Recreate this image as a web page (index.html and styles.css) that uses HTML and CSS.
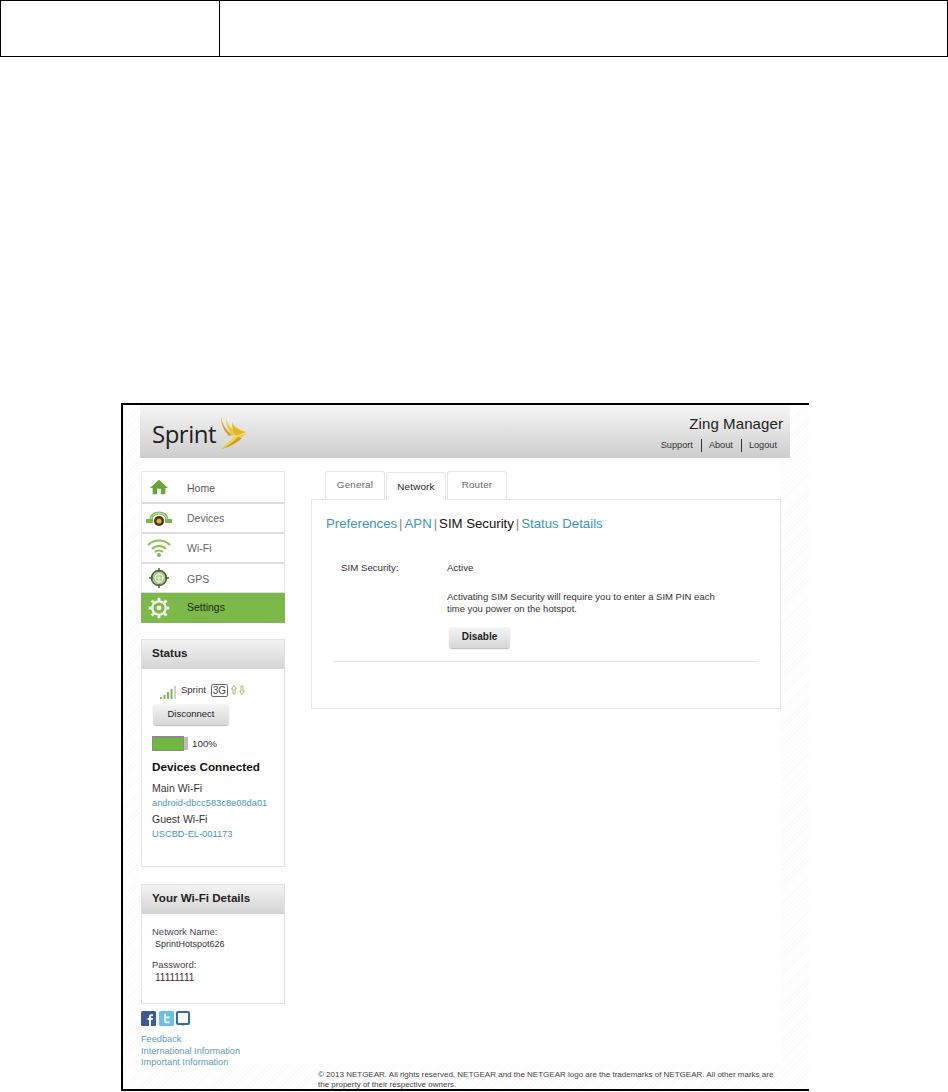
FILE: index.html
```html
<!DOCTYPE html>
<html lang="en">
<head>
    <meta charset="UTF-8">
    <title>Zing Manager</title>
    <link rel="stylesheet" href="styles.css">
</head>
<body>
    <div class="doc-table">
        <div class="doc-cell doc-cell-left"></div>
        <div class="doc-cell"></div>
    </div>

    <div class="shot">
        <div class="header">
            <div class="logo">
                <span class="logo-text">Sprint</span>
                <svg class="logo-wings" width="29" height="34" viewBox="0 0 29 34">
                    <path d="M3 1 C4 8 8 14 14 19 L11 20 C6 15 3 8 3 1Z" fill="#c9a227"/>
                    <path d="M8 2 C9 8 13 13 20 17 L15 20 C10 15 8 8 8 2Z" fill="#f0c92e"/>
                    <path d="M14 6 C15 10 20 14 28 16 L18 20 C15 16 14 11 14 6Z" fill="#e3b622"/>
                    <path d="M28 17 C21 25 12 31 3 33 C7 29 12 25 16 21Z" fill="#f4d23c"/>
                    <path d="M20 21 C14 27 8 31 3 33 C8 32 17 29 24 22Z" fill="#c9a227"/>
                </svg>
            </div>
            <div class="header-right">
                <div class="app-title">Zing Manager</div>
                <div class="header-links">
                    <span>Support</span><span class="header-sep"></span><span>About</span><span class="header-sep"></span><span>Logout</span>
                </div>
            </div>
        </div>

        <div class="columns">
            <div class="sidebar">
                <div class="nav">
                    <div class="nav-item nav-home">
                        <svg class="nav-icon" width="20" height="17" viewBox="0 0 22 18"><path d="M11 1 L21 10 H18 V17 H13 V11 H9 V17 H4 V10 H1Z" fill="#6aa53b"/></svg>
                        <span>Home</span>
                    </div>
                    <div class="nav-item nav-devices">
                        <svg class="nav-icon" width="28" height="18" viewBox="0 0 28 18">
                            <path d="M6 10 C8 2 20 2 22 10" fill="none" stroke="#7ab648" stroke-width="3"/>
                            <path d="M6 10 C8 2 20 2 22 10" fill="none" stroke="#d5e8c4" stroke-width="1"/>
                            <rect x="1" y="10" width="7" height="4" fill="#7ab648"/>
                            <rect x="20" y="10" width="7" height="4" fill="#7ab648"/>
                            <circle cx="14" cy="12" r="5" fill="#3a3420"/>
                            <circle cx="14" cy="12" r="2.6" fill="#e0b12c"/>
                        </svg>
                        <span>Devices</span>
                    </div>
                    <div class="nav-item nav-wifi">
                        <svg class="nav-icon" width="24" height="18" viewBox="0 0 24 18">
                            <path d="M1 6 C7 0 17 0 23 6" fill="none" stroke="#8cc152" stroke-width="2"/>
                            <path d="M5 10 C9 6 15 6 19 10" fill="none" stroke="#8cc152" stroke-width="2"/>
                            <path d="M8 13 C10 11 14 11 16 13" fill="none" stroke="#8cc152" stroke-width="2"/>
                            <circle cx="12" cy="16" r="2" fill="#7ab648"/>
                        </svg>
                        <span>Wi-Fi</span>
                    </div>
                    <div class="nav-item nav-gps">
                        <svg class="nav-icon" width="20" height="20" viewBox="0 0 20 20">
                            <circle cx="10" cy="10" r="7.5" fill="#a9cf86" stroke="#4c5a40" stroke-width="1.6"/>
                            <circle cx="10" cy="10" r="4" fill="none" stroke="#e9f2df" stroke-width="1"/>
                            <path d="M10 0V4M10 16V20M0 10H4M16 10H20" stroke="#4c5a40" stroke-width="1.4"/>
                            <path d="M10 5V15M5 10H15" stroke="#e9f2df" stroke-width="1"/>
                        </svg>
                        <span>GPS</span>
                    </div>
                    <div class="nav-item nav-settings">
                        <svg class="nav-icon" width="21" height="21" viewBox="0 0 22 22">
                            <circle cx="11" cy="11" r="7" fill="none" stroke="#f2f7ec" stroke-width="2.4"/>
                            <circle cx="11" cy="11" r="2.6" fill="#f2f7ec"/>
                            <path d="M11 0V3.500M11 18.500V22M0 11H3.500M18.500 11H22M3.200 3.200L5.800 5.800M16.200 16.200L18.800 18.800M18.800 3.200L16.200 5.800M5.800 16.200L3.200 18.800" stroke="#f2f7ec" stroke-width="3"/>
                        </svg>
                        <span>Settings</span>
                    </div>
                </div>

                <div class="box box-status">
                    <div class="box-head">Status</div>
                    <div class="box-body">
                        <div class="signal-row">
                            <svg class="signal" width="18" height="14" viewBox="0 0 18 14">
                                <path d="M1 12h2v2H1zM4.500 10h2v4h-2zM8 7h2v7H8zM11.500 4h2v10h-2z" fill="#7ab648"/>
                                <path d="M15 1h2v13h-2z" fill="#cfcfcf"/>
                            </svg>
                            <span class="carrier">Sprint</span>
                            <span class="net-badge">3G</span>
                            <svg class="arrows" width="14" height="10" viewBox="0 0 14 10">
                                <path d="M3 .5L5.500 4H4V9H2V4H.5Z" fill="none" stroke="#9ccb6c"/>
                                <path d="M11 9.500L13.500 6H12V1H10V6H8.500Z" fill="none" stroke="#9ccb6c"/>
                            </svg>
                        </div>
                        <div class="btn btn-disconnect">Disconnect</div>
                        <div class="battery-row">
                            <div class="battery"><div class="battery-fill"></div></div>
                            <div class="battery-cap"></div>
                            <span class="battery-text">100%</span>
                        </div>
                        <div class="devices-title">Devices Connected</div>
                        <div class="device-label">Main Wi-Fi</div>
                        <div class="device-name">android-dbcc583c8e08da01</div>
                        <div class="device-label">Guest Wi-Fi</div>
                        <div class="device-name">USCBD-EL-001173</div>
                    </div>
                </div>

                <div class="box box-wifi">
                    <div class="box-head">Your Wi-Fi Details</div>
                    <div class="box-body">
                        <div class="wifi-label">Network Name:</div>
                        <div class="wifi-value">SprintHotspot626</div>
                        <div class="wifi-label wifi-label-second">Password:</div>
                        <div class="wifi-value wifi-value-pass">11111111</div>
                    </div>
                </div>

                <div class="social">
                    <svg width="15" height="15" viewBox="0 0 15 15"><rect width="15" height="15" rx="1.500" fill="#3c5a99"/><path d="M8 15V9H6.500V7H8V5.500C8 4 9 3.200 10.200 3.200H12V5H10.800C10.300 5 10 5.300 10 5.800V7H12L11.700 9H10V15Z" fill="#fff"/></svg>
                    <svg width="15" height="15" viewBox="0 0 15 15"><rect width="15" height="15" rx="1.500" fill="#6cc0e5"/><path d="M5 3H7V5.500H10.500V7.500H7V9.500C7 10 7.300 10.300 7.800 10.300H10.500V12.200H7C5.800 12.200 5 11.400 5 10.200Z" fill="#e6f5fb"/></svg>
                    <svg class="social-last" width="14" height="15" viewBox="0 0 14 15"><rect x="1" y="1" width="12" height="12" rx="1" fill="#fff" stroke="#2f6f9f" stroke-width="2"/><path d="M5 13H9L7 15Z" fill="#2f6f9f"/></svg>
                </div>

                <div class="side-links">
                    <div>Feedback</div>
                    <div>International Information</div>
                    <div>Important Information</div>
                </div>
            </div>

            <div class="main">
                <div class="tabs">
                    <div class="tab">General</div>
                    <div class="tab tab-active">Network</div>
                    <div class="tab">Router</div>
                </div>
                <div class="panel">
                    <div class="subnav">
                        <span class="subnav-link">Preferences</span><span class="subnav-sep">|</span><span class="subnav-link">APN</span><span class="subnav-sep">|</span><span class="subnav-current">SIM Security</span><span class="subnav-sep">|</span><span class="subnav-link">Status Details</span>
                    </div>
                    <div class="sim-row">
                        <div class="sim-label">SIM Security:</div>
                        <div class="sim-content">
                            <div>Active</div>
                            <p class="sim-note">Activating SIM Security will require you to enter a SIM PIN each time you power on the hotspot.</p>
                            <div class="btn btn-disable">Disable</div>
                        </div>
                    </div>
                    <div class="panel-rule"></div>
                </div>
            </div>
        </div>

        <div class="footer">© 2013 NETGEAR. All rights reserved. NETGEAR and the NETGEAR logo are the trademarks of NETGEAR. All other marks are the property of their respective owners.</div>
    </div>
</body>
</html>
```

FILE: styles.css
```css
html, body {
    margin: 0;
    padding: 0;
    background: #fff;
}

body {
    font-family: "Liberation Sans", Arial, sans-serif;
    color: #333;
    overflow: hidden;
    height: 1092px;
}

/* document table above the screenshot */
.doc-table {
    display: flex;
    height: 57px;
    box-sizing: border-box;
    border: 1px solid #000;
}

.doc-cell {
    flex: 1;
}

.doc-cell-left {
    flex: 0 0 218px;
    border-right: 1px solid #000;
}

/* the screenshot itself */
.shot {
    display: flex;
    flex-direction: column;
    box-sizing: border-box;
    width: 688px;
    height: 688px;
    margin: 346px 0 0 121px;
    padding-left: 17px;
    border-top: 2px solid #000;
    border-left: 2px solid #000;
    border-bottom: 2px solid #000;
    background: repeating-linear-gradient(135deg, #fff, #fff 2px, #f9f9f9 2px, #f9f9f9 3px);
}

.header {
    display: flex;
    justify-content: space-between;
    flex: 0 0 53px;
    width: 650px;
    background: linear-gradient(#f6f6f6, #cdcdcd);
}

.logo {
    display: flex;
    padding-left: 12px;
}

.logo-text {
    margin-top: 11px;
    font-family: "Open Sans", sans-serif;
    font-size: 24px;
    line-height: 36px;
    color: #222;
    letter-spacing: -0.5px;
}

.logo-wings {
    margin: 11px 0 0 2px;
}

.header-right {
    padding: 10px 7px 0 0;
    text-align: right;
}

.app-title {
    font-size: 15px;
    line-height: 18px;
    color: #222;
    letter-spacing: 0.1px;
}

.header-links {
    display: flex;
    justify-content: flex-end;
    align-items: center;
    margin: 5px 6px 0 0;
    font-size: 9.200px;
    line-height: 14px;
    color: #333;
}

.header-sep {
    width: 1px;
    height: 13px;
    margin: 0 7px 0 8px;
    background: #333;
}

.columns {
    display: flex;
    flex: 1;
    min-height: 0;
    width: 641px;
    background: #fff;
}

.sidebar {
    flex: 0 0 144px;
    margin: 13px 0 0 1px;
}

.nav {
    border: 1px solid #e8e8e8;
    border-bottom: 0;
    box-sizing: border-box;
    height: 151px;
    background: #fff;
}

.nav-item {
    display: flex;
    align-items: center;
    box-sizing: border-box;
    position: relative;
    height: 30px;
    padding-left: 45px;
    font-size: 10.500px;
    color: #666;
    border-bottom: 2px solid #ddd;
}

.nav-home {
    height: 32px;
    padding-top: 2px;
    color: #555;
}

.nav-gps {
    padding-top: 2px;
}

.nav-settings {
    height: 30px;
    margin: -1px -1px 0;
    padding-left: 46px;
    padding-bottom: 2px;
    background: #7cb84a;
    color: #1c2a10;
    border-bottom: 0;
}

.nav-icon {
    position: absolute;
    left: 17px;
    top: 50%;
    transform: translate(-50%, -50%);
}

.nav-settings .nav-icon {
    left: 18px;
}

.box {
    box-sizing: border-box;
    border: 1px solid #e2e2e2;
    background: #fff;
}

.box-status {
    height: 228px;
    margin-top: 17px;
}

.box-wifi {
    height: 120px;
    margin-top: 17px;
}

.box-head {
    height: 29px;
    padding-left: 10px;
    font-size: 11.600px;
    font-weight: bold;
    line-height: 26px;
    color: #222;
    background: linear-gradient(#f3f3f3, #d4d4d4);
}

.box-body {
    padding-left: 10px;
}

.signal-row {
    display: flex;
    align-items: flex-start;
    padding: 14px 0 0 7px;
    height: 20px;
}

.signal {
    margin-top: 2px;
}

.carrier {
    margin-left: 4px;
    font-size: 9.500px;
    line-height: 13px;
    color: #333;
}

.net-badge {
    box-sizing: border-box;
    width: 17px;
    height: 13px;
    margin: 1px 0 0 5px;
    border: 1px solid #666;
    border-radius: 2px;
    font-size: 10px;
    line-height: 11px;
    text-align: center;
    color: #444;
}

.arrows {
    margin: 2px 0 0 3px;
}

.btn {
    box-sizing: border-box;
    height: 21px;
    border-radius: 3px;
    font-size: 10px;
    line-height: 20px;
    text-align: center;
    color: #222;
    background: linear-gradient(#f5f5f5, #d6d6d6);
    box-shadow: 0 1px 1px #bbb;
}

.btn-disconnect {
    width: 76px;
    margin: 1px 0 0 1px;
    font-size: 9.500px;
}

.battery-row {
    display: flex;
    align-items: center;
    margin-top: 11px;
}

.battery {
    box-sizing: border-box;
    width: 32px;
    height: 15px;
    border: 1px solid #8a8a8a;
    border-top-width: 2px;
    background: #6fb83f;
}

.battery-fill {
    height: 100%;
}

.battery-cap {
    width: 4px;
    height: 13px;
    background: #bdbdbd;
}

.battery-text {
    margin-left: 4px;
    font-size: 9.800px;
    color: #333;
}

.devices-title {
    margin-top: 8px;
    font-size: 11.700px;
    font-weight: bold;
    line-height: 16px;
    color: #111;
}

.device-label {
    margin-top: 6px;
    font-size: 10.500px;
    line-height: 15px;
    color: #333;
}

.device-name {
    font-size: 9.300px;
    line-height: 15px;
    color: #4a97b5;
}

.device-name + .device-label {
    margin-top: 1px;
}

.wifi-label {
    font-size: 9.500px;
    line-height: 13px;
    color: #4a4450;
    margin-top: 11px;
}

.wifi-label-second {
    margin-top: 7px;
}

.wifi-value {
    padding-left: 3px;
    font-size: 9px;
    line-height: 13px;
    color: #333;
}

.wifi-value-pass {
    font-size: 10px;
    color: #3a2a3a;
}

.social {
    display: flex;
    gap: 3px;
    margin-top: 7px;
    height: 15px;
}

.social-last {
    margin-left: -1px;
}

.side-links {
    margin-top: 8px;
    font-size: 9.200px;
    line-height: 11.500px;
    color: #5f9cb5;
}

.main {
    flex: 0 0 470px;
    margin: 13px 0 0 26px;
}

.tabs {
    display: flex;
    align-items: flex-end;
    height: 28px;
    padding-left: 14px;
    position: relative;
    z-index: 1;
}

.tab {
    box-sizing: border-box;
    width: 60px;
    height: 28px;
    border: 1px solid #e6e6e6;
    border-bottom: 0;
    border-radius: 3px 3px 0 0;
    font-size: 9.800px;
    line-height: 26px;
    letter-spacing: 0.2px;
    text-align: center;
    color: #666;
    background: #fff;
}

.tab-active {
    height: 28px;
    margin: 0 1px 0 1px;
    transform: translateY(1px);
    line-height: 28px;
    color: #222;
}

.panel {
    box-sizing: border-box;
    height: 210px;
    border: 1px solid #e6e6e6;
    background: #fff;
}

.subnav {
    margin: 15px 0 0 14px;
    font-size: 13.200px;
    line-height: 18px;
}

.subnav-link {
    color: #3b96b8;
}

.subnav-current {
    color: #111;
}

.subnav-sep {
    margin: 0 2px;
    color: #888;
}

.sim-row {
    display: flex;
    margin: 28px 0 0 29px;
    font-size: 9.700px;
    line-height: 14px;
    color: #333;
}

.sim-label {
    flex: 0 0 106px;
}

.sim-note {
    width: 285px;
    margin: 16px 0 0;
    font-size: 9.500px;
    line-height: 12px;
    color: #333;
}

.btn-disable {
    width: 61px;
    margin: 12px 0 0 2px;
    font-weight: bold;
}

.panel-rule {
    height: 1px;
    margin: 13px 23px 0 21px;
    background: #e2e2e2;
}

.footer {
    flex: 0 0 21px;
    box-sizing: border-box;
    width: 460px;
    margin-left: 178px;
    padding-top: 6px;
    font-size: 8px;
    line-height: 9.500px;
    color: #444;
}
```
